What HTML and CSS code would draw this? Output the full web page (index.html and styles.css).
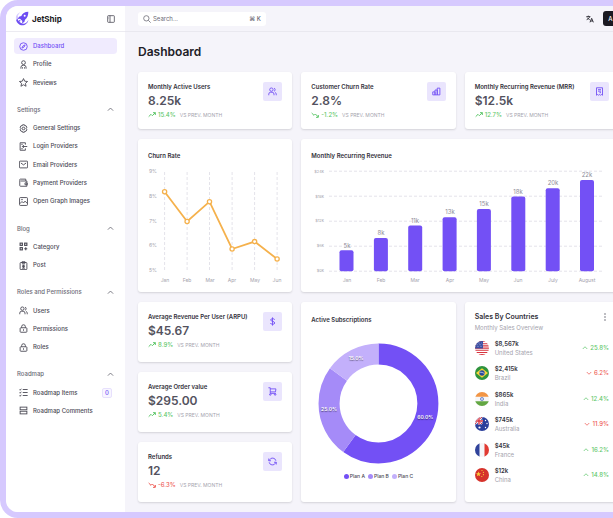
FILE: index.html
```html
<!DOCTYPE html>
<html lang="en">
<head>
<meta charset="utf-8">
<title>JetShip Dashboard</title>
<link rel="stylesheet" href="styles.css">
</head>
<body>
<svg class="sprite" aria-hidden="true">
  <symbol id="up" viewBox="0 0 24 24"><path d="M2 17l7-7 4 4 9-9M15 5h7v7"/></symbol>
  <symbol id="down" viewBox="0 0 24 24"><path d="M2 6l7 7 4-4 9 9M15 19h7v-7"/></symbol>
  <symbol id="chev-up" viewBox="0 0 24 24"><path d="M3 16l9-9 9 9"/></symbol>
  <symbol id="chev-down" viewBox="0 0 24 24"><path d="M3 8l9 9 9-9"/></symbol>
  <symbol id="users" viewBox="0 0 24 24"><circle cx="9" cy="7" r="4.5"/><path d="M2 22v-3a5 5 0 0 1 5-5h4a5 5 0 0 1 5 5v3M16 3a4.500 4.500 0 0 1 0 8.500M19 14.500a5 5 0 0 1 3 4.500v3"/></symbol>
  <symbol id="lock" viewBox="0 0 24 24"><rect x="3" y="10" width="18" height="12" rx="2"/><path d="M7 10V7a5 5 0 0 1 10 0v3M12 14v4"/></symbol>
</svg>
<div class="frame">
  <aside class="sidebar">
    <div class="brand">
      <svg class="logo" viewBox="0 0 42 45" aria-hidden="true">
        <path d="M7 13C0 22 3 36 14 41c11 5 24-1 26-14-4 9-12 13-20 10C11 34 6 25 7 13z" fill="#6d4df2"/>
        <path d="M4 27c-4-10 2-20 12-23C10 9 7 17 8 24z" fill="#d9cffd"/>
        <path d="M40 2c-11 0-18 5-21 13l-7 2-4 7 7-1 7 7-1 7 7-4 2-7c7-6 10-13 10-24z" fill="#6d4df2"/>
        <path d="M14 26l-5 8 8-4z" fill="#6d4df2"/>
        <circle cx="29" cy="14" r="3" fill="#fff"/>
      </svg>
      <span class="brand-name">JetShip</span>
      <button class="icon-button" aria-label="Toggle sidebar"><svg class="icon" viewBox="0 0 24 24"><rect x="2" y="2" width="20" height="20" rx="2"/><path d="M9 2v20M5 7h1M5 11h1"/></svg></button>
    </div>
    <nav class="nav">
      <div class="group rows-3">
        <a class="link active" href="#"><svg class="icon" viewBox="0 0 24 24"><circle cx="12" cy="12" r="10"/><path d="M16.500 7.500l-3 6-6 3 3-6z"/></svg>Dashboard</a>
        <a class="link" href="#"><svg class="icon" viewBox="0 0 24 24"><circle cx="12" cy="7" r="5"/><path d="M5 23v-3a6 6 0 0 1 6-6h2a6 6 0 0 1 6 6v3M9 19v4M15 19v4"/></svg>Profile</a>
        <a class="link" href="#"><svg class="icon" viewBox="0 0 24 24"><path d="M12 1.500l3.200 7 7.600.800-5.700 5.100 1.700 7.600-6.800-4-6.800 4 1.700-7.600L1.200 9.300l7.600-.800z"/></svg>Reviews</a>
      </div>
      <div class="group rows-6">
        <button class="heading">Settings<svg class="chev"><use href="#chev-up"/></svg></button>
        <a class="link" href="#"><svg class="icon" viewBox="0 0 24 24"><path d="M9.500 2h5l1 3 3-.500 2.500 4-2 3.500 2 3.500-2.500 4-3-.500-1 3h-5l-1-3-3 .500-2.500-4 2-3.500-2-3.500 2.500-4 3 .500z"/><circle cx="12" cy="12" r="3.500"/></svg>General Settings</a>
        <a class="link" href="#"><svg class="icon" viewBox="0 0 24 24"><path d="M17 7V2H3v20h14v-5M22 12H9M13 8l-4 4 4 4M6 6h4M6 18h4"/></svg>Login Providers</a>
        <a class="link" href="#"><svg class="icon" viewBox="0 0 24 24"><rect x="1" y="3" width="22" height="18" rx="2"/><path d="M5 8l7 5 7-5"/></svg>Email Providers</a>
        <a class="link" href="#"><svg class="icon" viewBox="0 0 24 24"><path d="M18 8V3H4a2 2 0 0 0-2 3v14a2 2 0 0 0 2 2h17V8H4M21 13h-5v5h6v-5"/></svg>Payment Providers</a>
        <a class="link" href="#"><svg class="icon" viewBox="0 0 24 24"><rect x="1.500" y="1.500" width="21" height="21" rx="2"/><path d="M2 18l6-6 4 4 4-5 6 6"/><circle cx="8" cy="7" r="1"/></svg>Open Graph Images</a>
      </div>
      <div class="group rows-3">
        <button class="heading">Blog<svg class="chev"><use href="#chev-up"/></svg></button>
        <a class="link" href="#"><svg class="icon bold" viewBox="0 0 24 24"><rect x="3" y="3" width="6" height="6"/><rect x="15" y="3" width="6" height="6"/><rect x="3" y="15" width="6" height="6"/><path d="M18 14v8M14 18h8"/></svg>Category</a>
        <a class="link" href="#"><svg class="icon" viewBox="0 0 24 24"><rect x="3" y="4" width="18" height="19" rx="2"/><path d="M8 2h8v4H8zM8 11h8M8 15h8M8 19h8M12 10v9"/></svg>Post</a>
      </div>
      <div class="group rows-4">
        <button class="heading">Roles and Permissions<svg class="chev"><use href="#chev-up"/></svg></button>
        <a class="link" href="#"><svg class="icon"><use href="#users"/></svg>Users</a>
        <a class="link" href="#"><svg class="icon"><use href="#lock"/></svg>Permissions</a>
        <a class="link" href="#"><svg class="icon"><use href="#lock"/></svg>Roles</a>
      </div>
      <div class="group rows-3">
        <button class="heading">Roadmap<svg class="chev"><use href="#chev-up"/></svg></button>
        <a class="link" href="#"><svg class="icon" viewBox="0 0 24 24"><path d="M10 4h13M10 12h13M10 20h13M1 4l2 2 3-4M1 12l2 2 3-4M1 20l2 2 3-4"/></svg>Roadmap Items<span class="count">0</span></a>
        <a class="link" href="#"><svg class="icon" viewBox="0 0 24 24"><rect x="3" y="3" width="18" height="7"/><rect x="3" y="14" width="18" height="7"/></svg>Roadmap Comments</a>
      </div>
    </nav>
  </aside>

  <div class="page">
    <header class="topbar">
      <label class="search">
        <svg class="icon" viewBox="0 0 24 24"><circle cx="10" cy="10" r="8"/><path d="M16 16l7 7"/></svg>
        <input type="search" placeholder="Search..." aria-label="Search">
        <kbd>⌘ K</kbd>
      </label>
      <button class="icon-button language" aria-label="Language"><svg class="icon bold" viewBox="0 0 24 24"><path d="M1 5h12M7 2v3M11 5c-1 4-4 7-9 9M4 8c2 3 4 5 7 6M12 22l5-12 5 12M14 18h6"/></svg></button>
      <button class="avatar">A</button>
    </header>

    <main class="content">
      <h1>Dashboard</h1>
      <div class="grid">
        <section class="card stat">
          <div><h2>Monthly Active Users</h2><p class="value">8.25k</p><p class="trend good"><svg><use href="#up"/></svg>15.4%<span>VS PREV. MONTH</span></p></div>
          <span class="tile"><svg><use href="#users"/></svg></span>
        </section>
        <section class="card stat">
          <div><h2>Customer Churn Rate</h2><p class="value">2.8%</p><p class="trend good"><svg><use href="#down"/></svg>-1.2%<span>VS PREV. MONTH</span></p></div>
          <span class="tile"><svg viewBox="0 0 24 24"><path d="M2 13h6v8H2zM8 8h6v13H8zM14 3h7v18h-7z"/></svg></span>
        </section>
        <section class="card stat">
          <div><h2>Monthly Recurring Revenue (MRR)</h2><p class="value">$12.5k</p><p class="trend good"><svg><use href="#up"/></svg>12.7%<span>VS PREV. MONTH</span></p></div>
          <span class="tile"><svg viewBox="0 0 24 24"><path d="M4 2h16v20l-3-2-2 2-3-2-3 2-2-2-3 2zM8 7h8M8 11h8M12 15h4"/></svg></span>
        </section>

        <section class="card chart">
          <h2>Churn Rate</h2>
          <svg viewBox="10 22 133 131" preserveAspectRatio="xMinYMin" role="img" aria-label="Churn rate by month">
            <path class="gridline" d="M26.600 33v98M49.100 33v98M71.500 33v98M94.100 33v98M116.600 33v98M139.100 33v98"/>
            <g class="axis end"><text x="19" y="34">9%</text><text x="19" y="59">8%</text><text x="19" y="84">7%</text><text x="19" y="108">6%</text><text x="19" y="133">5%</text></g>
            <g class="axis"><text x="27" y="143">Jan</text><text x="49" y="143">Feb</text><text x="72" y="143">Mar</text><text x="94" y="143">Apr</text><text x="117" y="143">May</text><text x="139" y="143">Jun</text></g>
            <g class="line"><path d="M26.600 52.700L49.100 82.500 71.500 62.700 94.100 110 116.600 102.600 139.100 120"/><circle cx="26.600" cy="52.700" r="2.100"/><circle cx="49.100" cy="82.500" r="2.100"/><circle cx="71.500" cy="62.700" r="2.100"/><circle cx="94.100" cy="110" r="2.100"/><circle cx="116.600" cy="102.600" r="2.100"/><circle cx="139.100" cy="120" r="2.100"/></g>
          </svg>
        </section>
        <section class="card chart wide">
          <h2>Monthly Recurring Revenue</h2>
          <svg viewBox="10 22 297 131" preserveAspectRatio="xMinYMin" role="img" aria-label="Recurring revenue by month">
            <path class="gridline" d="M28 32.200h275M28 57.200h275M28 82.200h275M28 107.200h275M28 132.200h275"/>
            <g class="axis small end"><text x="23" y="34">$24k</text><text x="23" y="59">$18k</text><text x="23" y="83">$12k</text><text x="23" y="108">$6k</text><text x="23" y="133">$0k</text></g>
            <g class="bars"><rect x="38.500" y="111.300" width="14" height="21" rx="2"/><rect x="72.900" y="98.900" width="14" height="33.400" rx="2"/><rect x="107.200" y="86.500" width="14" height="45.800" rx="2"/><rect x="141.600" y="78.200" width="14" height="54.100" rx="2"/><rect x="175.900" y="70" width="14" height="62.300" rx="2"/><rect x="210.300" y="57.500" width="14" height="74.800" rx="2"/><rect x="244.700" y="49.200" width="14" height="83.100" rx="2"/><rect x="279" y="41" width="14" height="91.300" rx="2"/></g>
            <g class="axis big"><text x="46" y="109">5k</text><text x="80" y="96">8k</text><text x="114" y="84">11k</text><text x="149" y="75">13k</text><text x="183" y="67">15k</text><text x="217" y="55">18k</text><text x="252" y="46">20k</text><text x="286" y="38">22k</text></g>
            <g class="axis"><text x="46" y="143">Jan</text><text x="80" y="143">Feb</text><text x="114" y="143">Mar</text><text x="149" y="143">Apr</text><text x="183" y="143">May</text><text x="217" y="143">Jun</text><text x="252" y="143">July</text><text x="286" y="143">August</text></g>
          </svg>
        </section>

        <div class="stack">
          <section class="card stat">
            <div><h2>Average Revenue Per User (ARPU)</h2><p class="value">$45.67</p><p class="trend good"><svg><use href="#up"/></svg>8.9%<span>VS PREV. MONTH</span></p></div>
            <span class="tile"><svg viewBox="0 0 24 24"><path d="M18 7c-1-3-11-4-11 1 0 4 11 3 11 8 0 5-11 4-12 0M12 1v22"/></svg></span>
          </section>
          <section class="card stat">
            <div><h2>Average Order value</h2><p class="value">$295.00</p><p class="trend good"><svg><use href="#up"/></svg>5.4%<span>VS PREV. MONTH</span></p></div>
            <span class="tile"><svg viewBox="0 0 24 24"><path d="M1 2h5v15h15M6 5h15l-1 8H6"/><circle cx="6" cy="20" r="2"/><circle cx="19" cy="20" r="2"/></svg></span>
          </section>
          <section class="card stat">
            <div><h2>Refunds</h2><p class="value">12</p><p class="trend bad"><svg><use href="#down"/></svg>-6.3%<span>VS PREV. MONTH</span></p></div>
            <span class="tile"><svg viewBox="0 0 24 24"><path d="M2 4v6h6M22 20v-6h-6M21 10a9 9 0 0 0-17-2l-2 2M3 14a9 9 0 0 0 17 2l2-2"/></svg></span>
          </section>
        </div>

        <section class="card donut">
          <h2>Active Subscriptions</h2>
          <svg viewBox="10 23 134 145" role="img" aria-label="Subscriptions by plan">
            <g fill="none" stroke-width="21" transform="rotate(-90 77.300 101.300)">
              <circle class="plan-a" cx="77.300" cy="101.300" r="49.300" pathLength="100" stroke-dasharray="60 40"/>
              <circle class="plan-b" cx="77.300" cy="101.300" r="49.300" pathLength="100" stroke-dasharray="25 75" stroke-dashoffset="-60"/>
              <circle class="plan-c" cx="77.300" cy="101.300" r="49.300" pathLength="100" stroke-dasharray="15 85" stroke-dashoffset="-85"/>
            </g>
            <g class="share"><text x="124" y="117">60.0%</text><text x="28" y="109">25.0%</text><text x="55" y="58">15.0%</text></g>
          </svg>
          <ul class="legend"><li class="a">Plan A</li><li class="b">Plan B</li><li class="c">Plan C</li></ul>
        </section>

        <section class="card countries">
          <div class="countries-head">
            <div><h2>Sales By Countries</h2><p>Monthly Sales Overview</p></div>
            <button class="icon-button" aria-label="More"><svg class="dots" viewBox="0 0 4 10"><circle cx="2" cy="2" r=".8"/><circle cx="2" cy="5" r=".8"/><circle cx="2" cy="8" r=".8"/></svg></button>
          </div>
          <ul>
            <li>
              <svg class="flag" viewBox="0 0 14 14"><path fill="#fff" d="M0 0h14v14H0z"/><path stroke="#d8343f" stroke-width="1.100" d="M0 .500h14M0 2.700h14M0 4.900h14M0 7.100h14M0 9.300h14M0 11.500h14M0 13.600h14"/><path fill="#3c4fa3" d="M0 0h8v7.500H0z"/><path stroke="#fff" stroke-width=".5" stroke-dasharray=".5 1" d="M1.500 2h6M1 3.700h7M.500 5.400h7"/></svg>
              <div><b>$8,567k</b><span>United States</span></div><em class="good"><svg><use href="#chev-up"/></svg>25.8%</em>
            </li>
            <li>
              <svg class="flag" viewBox="0 0 14 14"><path fill="#2f943d" d="M0 0h14v14H0z"/><path fill="#f9d63a" d="M7 2.200l6 4.800-6 4.800L1 7z"/><circle cx="7" cy="7" r="2.700" fill="#2b4a9b"/><path stroke="#fff" stroke-width=".6" fill="none" d="M4.500 6.300c2-.300 3.800.300 5 1.600"/></svg>
              <div><b>$2,415k</b><span>Brazil</span></div><em class="bad"><svg><use href="#chev-down"/></svg>6.2%</em>
            </li>
            <li>
              <svg class="flag" viewBox="0 0 14 14"><path fill="#f6f6f8" d="M0 0h14v14H0z"/><path fill="#f29545" d="M0 0h14v4.700H0z"/><path fill="#63a743" d="M0 9.300h14V14H0z"/><circle cx="7" cy="7" r="1.600" fill="#c7d2ef" stroke="#4263b8" stroke-width=".6"/></svg>
              <div><b>$865k</b><span>India</span></div><em class="good"><svg><use href="#chev-up"/></svg>12.4%</em>
            </li>
            <li>
              <svg class="flag" viewBox="0 0 14 14"><path fill="#2b3f9b" d="M0 0h14v14H0z"/><path stroke="#fff" stroke-width="2" d="M0 0l7 7M7 0L0 7"/><path stroke="#d8343f" stroke-width="1" d="M0 0l7 7M7 0L0 7"/><path stroke="#fff" stroke-width="2.400" d="M4 0v7.500M0 4h8"/><path stroke="#d8343f" stroke-width="1.400" d="M4 0v7.500M0 4h8"/><g fill="#fff"><circle cx="4.500" cy="10.500" r="1.100"/><circle cx="10.500" cy="3.500" r=".7"/><circle cx="12" cy="6.500" r=".7"/><circle cx="10.500" cy="10.500" r=".7"/></g></svg>
              <div><b>$745k</b><span>Australia</span></div><em class="bad"><svg><use href="#chev-down"/></svg>11.9%</em>
            </li>
            <li>
              <svg class="flag" viewBox="0 0 14 14"><path fill="#f6f6f8" d="M0 0h14v14H0z"/><path fill="#30439b" d="M0 0h4.500v14H0z"/><path fill="#e13a32" d="M9.500 0H14v14H9.500z"/></svg>
              <div><b>$45k</b><span>France</span></div><em class="good"><svg><use href="#chev-up"/></svg>16.2%</em>
            </li>
            <li>
              <svg class="flag" viewBox="0 0 14 14"><path fill="#d6322b" d="M0 0h14v14H0z"/><path fill="#f9cf3a" d="M3.500 3.500l.700 1.700 1.800.100-1.400 1.200.5 1.800-1.600-1-1.600 1 .5-1.800L1 5.300l1.800-.100z"/><g fill="#f9cf3a"><circle cx="7" cy="2.500" r=".6"/><circle cx="8.400" cy="4.300" r=".6"/><circle cx="8.400" cy="6.700" r=".6"/><circle cx="6.800" cy="8.500" r=".6"/></g></svg>
              <div><b>$12k</b><span>China</span></div><em class="good"><svg><use href="#chev-up"/></svg>14.8%</em>
            </li>
          </ul>
        </section>
      </div>
    </main>
  </div>
</div>
</body>
</html>
```
FILE: styles.css
```css
* { box-sizing: border-box; }
body, h1, h2, p, ul { margin: 0; padding: 0; }
ul { list-style: none; }
body {
  min-height: 100vh;
  overflow: hidden;
  background: #fff;
  color: #4b4a55;
  font: 500 6px/8px Inter, "Liberation Sans", sans-serif;
}
button, input, kbd { font: inherit; color: inherit; }
button { border: 0; background: none; padding: 0; }
svg { display: block; flex: none; fill: none; stroke: currentColor; stroke-width: 2.4; }
.sprite { position: absolute; width: 0; height: 0; }

/* The application is wider than the window and runs off its right edge. */
.frame {
  display: flex;
  min-height: 100vh;
  margin-right: -23px;
  border: 6px solid #d6c9fe;
  border-radius: 18px;
  background: #f5f4fa;
}
.icon { width: 9px; height: 9px; }
.icon.bold { stroke-width: 3; }
.icon-button { display: flex; }

.sidebar { width: 119px; flex: none; background: #fff; border-radius: 12px 0 0 12px; }
.brand {
  display: flex;
  align-items: center;
  gap: 3px;
  height: 26px;
  padding: 0 10px 0 9px;
  border-bottom: 1px solid #ecebf1;
}
.logo { width: 14px; height: 15px; stroke: none; }
.brand-name { flex: 1; color: #1b1a22; font-size: 8px; font-weight: 700; }
.brand .icon { width: 8px; height: 8px; }

.nav { display: flex; flex-direction: column; gap: 9px; height: 388px; padding: 5px 8px 0; }
.group { display: flex; flex-direction: column; }
.rows-3 { flex: 3 1 0; }
.rows-4 { flex: 4 1 0; }
.rows-6 { flex: 6 1 0; }
.link, .heading { display: flex; flex: 1 1 0; align-items: center; border: solid transparent; border-width: 1px 0; }
.link {
  gap: 5px;
  padding: 0 5px;
  border-radius: 4px;
  background-clip: padding-box;
  color: #4b4a55;
  text-decoration: none;
}
.link.active { background-color: #f0ebfe; color: #7350f5; }
.heading { justify-content: space-between; padding: 0 3px; color: #6c6b76; }
.chev { width: 7px; height: 7px; stroke-width: 3; }
.count {
  margin-left: auto;
  width: 10px;
  border: 1px solid #e7e0fd;
  border-radius: 2px;
  background: #f8f6ff;
  color: #7350f5;
  text-align: center;
}

.page { flex: 1; min-width: 0; }
.topbar {
  display: flex;
  align-items: center;
  height: 26px;
  padding: 0 12px 0 13px;
  border-bottom: 1px solid #e9e8ef;
}
.search {
  display: flex;
  align-items: center;
  gap: 2px;
  width: 128px;
  height: 14px;
  padding: 0 5px;
  border-radius: 3px;
  background: #fff;
  color: #6c6b76;
}
.search .icon { width: 8px; height: 8px; }
.search input { flex: 1; min-width: 0; border: 0; padding: 0; outline: 0; background: none; font-weight: 400; }
.search input::placeholder { color: #6c6b76; }
.language { margin-left: auto; margin-right: 9px; color: #33323b; }
.language .icon { width: 8px; height: 8px; }
.avatar { width: 15px; height: 15px; border-radius: 3px; background: #1b1a22; color: #fff; }

.content { padding: 0 11px 10px 13px; }
h1 { color: #212027; font-size: 12px; font-weight: 600; line-height: 40px; }
.grid { display: grid; grid-template-columns: repeat(3, minmax(0, 1fr)); gap: 10px 9px; }
.card { border-radius: 3px; background: #fff; box-shadow: 0 1px 2px #1b1a2226; }
h2 { color: #33323b; font-size: 6px; font-weight: 600; line-height: 10px; white-space: nowrap; }

.stat { display: flex; justify-content: space-between; padding: 10px; }
.stat > div { min-width: 0; }
.stat h2 { line-height: 9px; }
.value { color: #53525e; font-size: 12px; font-weight: 600; line-height: 20px; }
.trend { display: flex; align-items: center; gap: 2px; }
.trend svg { width: 8px; height: 8px; stroke-width: 3; }
.trend span { margin-left: 2px; color: #a4a3ad; font-size: 5px; font-weight: 400; }
.good { color: #5fc76b; }
.bad { color: #ee5b55; }
.tile {
  display: grid;
  place-items: center;
  width: 19px;
  height: 19px;
  border-radius: 2px;
  background: #eae5fd;
  color: #7350f5;
}
.tile svg { width: 9px; height: 9px; }

.chart { padding: 12px 10px 0; }
.chart.wide { grid-column: span 2; }
.chart svg, .donut > svg { width: 100%; height: auto; overflow: visible; stroke: none; }
.chart svg { height: 131px; }
.gridline { stroke: #e4e3ea; stroke-width: 1; stroke-dasharray: 3 2; }
.axis { fill: #a4a3ad; font-size: 5px; font-weight: 400; text-anchor: middle; }
.axis.end { text-anchor: end; }
.axis.small { font-size: 4px; }
.axis.big { fill: #8d8c98; font-size: 6px; }
.line { fill: #fff; stroke: #f5b14c; stroke-width: 1.3; }
.line path { fill: none; stroke-width: 1.8; }
.bars { fill: #7350f5; }

.stack { display: grid; grid-auto-rows: 60px; gap: 10px; }

.donut { padding: 13px 10px 0; }
.plan-a { stroke: #7350f5; }
.plan-b { stroke: #a58bf8; }
.plan-c { stroke: #c3b0fb; }
.share { fill: #fff; font-size: 5px; font-weight: 600; text-anchor: middle; text-shadow: 0 1px 1px #0008; }
.legend { display: flex; justify-content: center; gap: 3px; margin-top: 2px; font-size: 5px; }
.legend li { display: flex; align-items: center; gap: 1px; }
.legend li::before { content: ""; width: 5px; height: 5px; border-radius: 50%; background: currentColor; }
.legend .a::before { color: #7350f5; }
.legend .b::before { color: #a58bf8; }
.legend .c::before { color: #c3b0fb; }

.countries { display: flex; flex-direction: column; padding: 10px 10px 14px; }
.countries h2 { font-size: 7px; }
.countries-head { display: flex; justify-content: space-between; }
.countries-head p { margin-top: 2px; color: #a4a3ad; font-weight: 400; }
.countries-head .icon-button { padding: 0 2px; }
.dots { width: 4px; height: 10px; fill: #6c6b76; stroke: none; }
.countries ul { display: flex; flex: 1; flex-direction: column; margin-top: 3px; }
.countries li { display: flex; flex: 1; align-items: center; gap: 6px; }
.flag { width: 14px; height: 14px; border-radius: 50%; stroke: none; }
.countries b, .countries span { display: block; line-height: 9px; }
.countries b { color: #33323b; font-weight: 600; }
.countries span { color: #a4a3ad; font-weight: 400; }
.countries em { display: flex; align-items: center; gap: 2px; margin-left: auto; font-style: normal; }
.countries em svg { width: 6px; height: 6px; stroke-width: 3; }
```
